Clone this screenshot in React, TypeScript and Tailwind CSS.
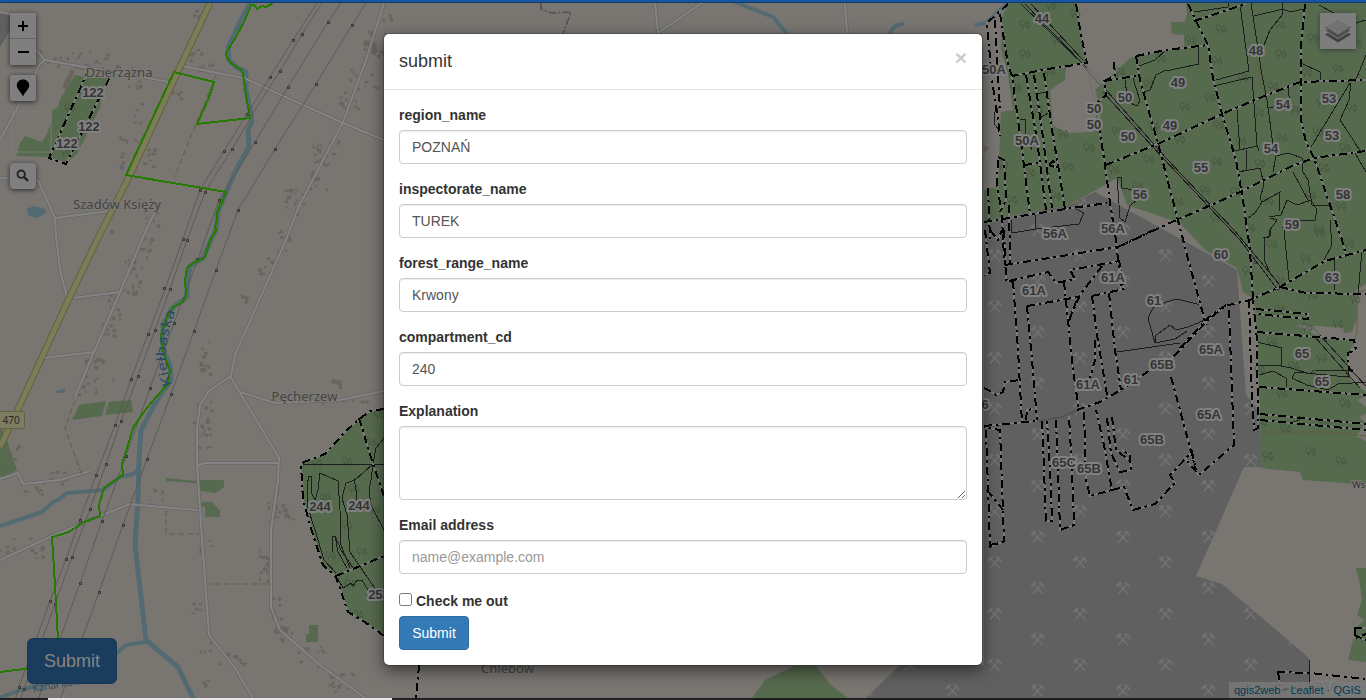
import React from "react";

const LAND = "#797672";
const FOREST = "#566a4e";
const QUARRY = "#606060";

const roads: string[] = [
  "0,178 38,180 55,218 56,235 60,270 67,297",
  "55,218 110,211",
  "0,140 35,75 39,65 45,60 36,50 20,16 0,12",
  "45,60 90,68 170,82",
  "182,66 244,78 343,123 384,140",
  "384,3 365,63 343,122 298,208 286,240 235,355 231,376 209,391 200,405 197,430 197,464 202,540 209,635 235,668 254,700",
  "230,376 279,458 278,480 271,530 271,607 280,630 320,665 365,698",
  "240,392 275,403 340,400 384,391",
  "198,466 204,463 278,463",
  "0,560 52,536 100,516 130,504 138,505 198,510",
  "155,212 146,230 120,292 94,352 75,397",
  "72,298 120,292",
  "44,358 94,352",
  "0,479 18,473 23,484 60,480 90,471",
  "655,3 658,33 702,3",
  "845,3 847,33",
];

const power: string[] = [
  "317,3 293,40 270,77 224,151 200,190 183,239 164,292 148,334 131,379 115,425 96,475 80,520 66,559 50,601 19,687 15,700",
  "322,3 302,34 280,71 258,105 232,149 205,192 187,240 170,289 155,330 138,376 121,421 106,464 90,509 72,557 55,604 24,689 20,700",
  "341,3 328,22 288,87 255,142 219,200 198,259 174,323 150,388 126,456 102,521 80,583 38,700",
  "366,3 352,25 316,84 275,149 238,210 216,270 194,331 171,394 147,459 123,525 99,592 60,700",
];
const pylons: number[][] = [
  [293, 40], [270, 77], [247, 114], [224, 151], [200, 190], [183, 239], [164, 288], [148, 334], [131, 379], [115, 425], [96, 475], [80, 520], [66, 559], [50, 601], [19, 687],
  [302, 34], [280, 71], [232, 149], [205, 192], [187, 240], [170, 289], [155, 330], [138, 376], [121, 421], [106, 464], [90, 509], [72, 557], [55, 604], [24, 689],
  [328, 22], [288, 87], [255, 142], [219, 200], [197, 259], [174, 323], [150, 388], [126, 456], [102, 521], [80, 583],
  [352, 25], [316, 84], [275, 149], [238, 210], [216, 270], [194, 331], [171, 394], [147, 459], [123, 525], [99, 592],
  [1057, 38], [1158, 151], [1206, 206], [1255, 262], [1278, 288], [1351, 370],
];

const green =
  "273,3 266,7 262,6 257,9 256,7 254,5 251,5 245,20 236,37 226,53 227,58 232,64 240,69 243,73 244,82 246,95 250,118 197,124 208,100 214,82 174,72 126,175 226,192 223,199 223,202 220,204 219,209 217,212 217,221 215,226 216,231 211,238 208,247 205,257 200,260 193,263 187,268 185,280 186,294 183,302 175,306 169,313 165,323 161,335 162,347 166,361 170,370 168,384 155,398 143,413 133,428 128,445 122,464 123,475 104,488 99,505 100,516 82,523 69,532 52,537 55,585 58,640";

const dashed: string[] = [
  "89,69 49,158 66,164 112,73 89,69",
  "384,409 370,411 357,421 345,432 325,454 304,462 301,465 303,500 313,535 323,565 336,577 348,612 362,620 384,636",
  "359,418 373,464 384,496", "336,576 360,566 384,556",
  "1008,4 987,23 992,80 998,120 1000,136",
  "995,20 998,75 1000,110",
  "1000,14 1008,65 1012,76 1022,150 1030,214",
  "1076,4 1081,35 1087,63 1048,69 1012,76",
  "1026,75 1037,140 1046,210", "1034,75 1042,130 1052,208",
  "1044,73 1052,130 1058,165 1065,209", "1024,165 1040,163",
  "1049,165 1053,161 1058,168 1049,165",
  "998,157 1004,160 1006,200 1000,212", "988,188 990,240", "998,160 997,185 1002,215 1003,240",
  "984,222 1065,209 1107,203",
  "1114,62 1115,76 1104,81 1106,95 1098,102 1100,133 1105,165 1110,203 1116,240 1121,289",
  "1104,81 1136,76", "1136,56 1140,80 1147,105 1158,143 1170,190 1180,228 1191,270 1206,325",
  "1136,56 1166,50 1208,45", "1106,165 1160,143 1222,114 1262,97 1300,82 1366,80",
  "1188,4 1198,25 1208,45 1213,78 1222,114 1236,160 1243,200 1250,250 1253,300",
  "1194,21 1246,4", "1305,4 1301,45 1301,120 1306,142 1314,158 1330,205 1342,240 1346,255",
  "1118,247 1172,222 1200,210 1240,192 1290,167 1314,158 1366,151",
  "1005,265 1118,247 1156,229",
  "1009,281 1048,272 1056,283 1075,279 1070,270 1120,261",
  "985,230 990,273 984,275", "1004,230 1006,280 1012,282", "1009,205 1010,265", "990,230 998,240 1002,230 1005,265",
  "1013,281 1018,350 1022,423", "1027,306 1032,360 1037,420", "1027,306 1078,297 1074,307 1069,321",
  "1064,282 1068,320 1073,370 1079,410", "1102,266 1080,295 1069,320",
  "1092,296 1124,289 1119,260", "1092,296 1097,335 1107,395", "1109,293 1115,350 1121,390",
  "1095,340 1095,360 1090,378",
  "984,426 1037,421", "1077,410 1100,402 1124,388 1150,370 1172,358 1180,350 1208,320 1225,306 1250,300 1280,287 1325,261 1366,250",
  "1180,348 1208,318 1226,305",
  "1042,421 1044,470 1046,521 1052,521 1050,470 1047,421",
  "1056,420 1058,470 1060,530 1074,525 1072,470 1069,416",
  "1084,412 1086,480 1090,496 1112,490 1104,445 1096,410",
  "1107,418 1111,453 1120,472 1131,470 1130,455 1122,450",
  "1112,417 1116,450 1130,461", "1112,490 1124,487 1133,510 1155,504 1175,483 1170,475 1192,452 1196,470",
  "1171,377 1180,410 1196,470", "1229,310 1234,445 1199,475 1186,460",
  "986,430 990,547 1004,541 1000,430 984,427", "987,490 1003,510", "990,545 1004,542",
  "984,388 992,392 996,395 1003,392 1005,382 1020,380", "1026,420 1027,410 1033,409",
  "1249,300 1252,400 1254,430 1258,428 1257,340 1253,300",
  "1256,309 1308,314 1308,319 1257,314", "1257,332 1354,340 1356,350 1348,353 1349,370 1356,372",
  "1259,387 1366,395", "1260,414 1366,424", "1260,420 1366,430",
  "1280,287 1306,293 1366,294",
  "1277,672 1310,673 1366,679", "1278,672 1281,690 1300,687",
  "419,665 416,700", "1354,628 1366,628", "1354,635 1366,640", "1355,627 1355,638 1366,634",
];

const thin: string[] = [
  "303,464 384,464", "384,438 376,448 373,464 355,480 346,483 342,498 347,515 350,552 376,590",
  "308,508 307,485 309,476 312,477 311,492 315,500 318,490 320,473 338,481 340,510 341,545 350,568",
  "308,508 315,530 324,560 336,573", "373,464 371,480 369,490 371,505 384,530", "354,478 356,490 356,500",
  "333,552 332,536 335,536 338,552 347,568", "335,536 341,550 353,568", "336,576 343,588 351,583 353,586 357,580 362,580 368,590",
  "1021,4 1087,68", "1025,4 1082,63", "1031,4 1083,60", "1103,92 1163,158 1240,240 1278,290",
  "1106,90 1166,158 1234,230 1280,285", "1320,335 1366,386", "1314,336 1360,388",
  "1020,119 1025,119 1026,135 1032,150", "1035,94 1048,92",
  "1040,118 1048,113", "1000,106 994,113 995,125 1000,131", "1125,80 1128,102 1137,106 1140,101 1133,78",
  "1166,70 1156,75 1150,90 1144,92", "1139,66 1155,60 1166,50", "1011,220 1012,233 1036,229 1079,224 1084,213 1074,208",
  "1035,215 1036,230", "1117,177 1121,177 1122,188 1134,190", "1117,177 1120,218 1125,222 1130,206 1142,195",
  "1194,12 1228,7 1228,3", "1240,5 1249,71 1216,80", "1251,3 1262,75 1267,100 1273,145",
  "1254,16 1283,9 1290,12 1304,9", "1282,3 1283,14 1270,30 1262,50", "1214,86 1252,77 1257,145 1259,151",
  "1166,71 1199,64 1198,47", "1237,110 1240,150", "1234,151 1258,146", "1269,108 1290,103 1288,88",
  "1301,63 1320,72 1320,80", "1350,83 1311,147", "1351,83 1349,100 1340,120 1361,152",
  "1366,55 1355,82", "1239,172 1246,170 1247,150", "1239,172 1260,168 1264,185 1260,198 1262,202 1280,192 1279,212",
  "1273,172 1276,156 1288,153 1302,158 1303,172 1308,180 1312,205 1331,206",
  "1262,202 1255,213 1248,218", "1293,172 1309,202",
  "1269,217 1281,215 1287,200 1297,205 1311,200 1317,210 1315,220 1297,220 1282,228",
  "1284,230 1285,240", "1270,218 1277,220 1270,230 1269,237 1263,238", "1270,230 1270,236 1264,238 1264,260 1271,275", "1284,230 1289,280",
  "1330,220 1332,245 1324,260", "1334,258 1334,290", "1362,250 1358,295",
  "1155,343 1148,318 1153,308 1166,302 1177,299 1201,305", "1155,343 1155,336 1170,325 1176,330 1188,327 1205,320",
  "1155,343 1175,339 1187,331", "1117,352 1180,343",
  "1257,342 1282,348 1281,366 1259,365", "1259,375 1273,371 1286,378 1287,387",
  "1281,366 1291,368 1310,374 1314,370 1348,371 1348,377 1295,372 1292,378 1307,385 1328,390 1338,384 1366,382",
  "1309,660 1309,700", "1290,423 1299,420 1299,416", "1319,5 1345,19 1352,24 1366,20", "1366,172 1355,153",
];

const trees: number[][] = [
  [1025, 25], [1025, 54], [1050, 72], [1016, 88], [1038, 110], [1051, 6], [1075, 14], [1063, 134], [1089, 148], [1068, 167], [1030, 173], [1056, 196], [1012, 200], [1003, 165], [1117, 131], [1114, 170], [1149, 84], [1154, 126], [1120, 72], [1149, 160], [1138, 187], [1161, 59], [1057, 40],
  [1221, 29], [1191, 40], [1217, 61], [1243, 78], [1281, 54], [1280, 25], [1273, 87], [1259, 113], [1210, 98], [1185, 107], [1219, 125], [1282, 138], [1241, 141], [1217, 162], [1205, 190], [1178, 202], [1180, 140], [1260, 164], [1268, 201], [1236, 192], [1216, 218], [1250, 228], [1311, 195], [1324, 168], [1341, 206], [1319, 230], [1313, 38], [1338, 69], [1307, 73], [1352, 108], [1322, 102], [1345, 148], [1318, 132], [1295, 110], [1357, 43],
  [1272, 245], [1306, 259], [1349, 244], [1320, 233], [1280, 281], [1280, 310], [1307, 328], [1312, 295], [1355, 300], [1338, 324], [1272, 342], [1322, 358], [1294, 366], [1260, 370], [1282, 394], [1345, 404], [1286, 429], [1262, 423], [1311, 452], [1268, 456], [1341, 461], [1324, 422], [1248, 271],
  [317, 463], [347, 462], [354, 489], [325, 498], [347, 525], [362, 552], [331, 556], [350, 584], [358, 615], [371, 443], [375, 510], [70, 108], [66, 152], [380, 415],
];

type Label = [string, number, number];
const labels: Label[] = [
  ["122", 93, 93], ["122", 89, 127], ["122", 67, 144], ["244", 320, 507], ["244", 359, 506], ["253", 379, 595],
  ["44", 1042, 19], ["50A", 994, 70], ["50", 1125, 98], ["50", 1094, 109], ["50", 1094, 125], ["50", 1128, 137], ["50A", 1027, 141],
  ["48", 1256, 51], ["49", 1178, 83], ["49", 1170, 126], ["54", 1283, 105], ["53", 1329, 99], ["53", 1332, 136], ["54", 1271, 149],
  ["55", 1201, 168], ["56", 1140, 195], ["58", 1343, 195], ["59", 1292, 225], ["56A", 1055, 234], ["56A", 1113, 229], ["60", 1221, 255],
  ["63", 1332, 278], ["61A", 1034, 291], ["61A", 1113, 278], ["61", 1154, 301], ["65A", 1211, 350], ["65B", 1162, 365], ["61", 1131, 380],
  ["61A", 1088, 385], ["65", 1302, 354], ["65", 1322, 382], ["65A", 1209, 415], ["65B", 1152, 440], ["65C", 1064, 463], ["65B", 1089, 469], ["6", 985, 405],
];

/* x, y, spread x, spread y, count */
const clusters: number[][] = [
  [58, 57, 20, 9, 18], [92, 60, 15, 9, 13], [125, 70, 16, 5, 5], [134, 84, 5, 4, 5], [137, 112, 4, 12, 5], [130, 150, 11, 15, 16], [148, 154, 5, 12, 8],
  [176, 94, 6, 6, 5], [152, 218, 8, 9, 8], [146, 247, 6, 12, 10], [132, 275, 10, 20, 18], [113, 304, 8, 16, 12], [104, 325, 10, 12, 10], [98, 357, 14, 6, 7],
  [87, 380, 10, 16, 15], [374, 44, 12, 14, 12], [362, 75, 14, 14, 14], [348, 98, 10, 12, 14], [325, 152, 14, 12, 20], [317, 176, 9, 16, 12], [298, 199, 14, 14, 16],
  [280, 240, 10, 12, 9], [263, 265, 9, 12, 7], [203, 357, 6, 16, 14], [200, 420, 10, 20, 16], [204, 438, 7, 10, 8], [342, 400, 26, 3, 7],
  [275, 498, 10, 13, 12], [281, 515, 14, 7, 10], [265, 565, 6, 16, 16], [273, 607, 8, 18, 11], [287, 635, 13, 8, 12], [311, 656, 14, 10, 12], [340, 680, 12, 12, 14], [205, 548, 6, 8, 5],
  [5, 545, 10, 8, 7], [28, 545, 15, 14, 9], [30, 490, 12, 5, 8], [57, 476, 16, 6, 10], [158, 497, 10, 8, 6], [194, 609, 6, 7, 5], [206, 646, 8, 5, 5], [204, 679, 5, 5, 5],
  [230, 660, 14, 10, 9], [8, 455, 9, 10, 8], [203, 66, 8, 4, 7], [194, 15, 5, 5, 4], [196, 40, 8, 20, 5], [386, 22, 4, 20, 7], [120, 378, 10, 4, 2], [984, 150, 3, 8, 4],
];

function scatter(): number[][] {
  let s = 17;
  const rnd = () => {
    s = (s * 16807) % 2147483647;
    return s / 2147483647;
  };
  const out: number[][] = [];
  clusters.forEach(([x, y, dx, dy, n]) => {
    for (let i = 0; i < n; i++) {
      out.push([x + (rnd() * 2 - 1) * dx, y + (rnd() * 2 - 1) * dy, 1.5 + rnd() * 2.6, 1.5 + rnd() * 2.2, rnd() * 50 - 25]);
    }
  });
  return out;
}

const buildings = scatter();

function MapCanvas() {
  return (
    <svg className="absolute inset-0 h-full w-full" viewBox="0 0 1366 700" aria-hidden="true">
      <defs>
        <pattern id="mine" x="973" y="231" width="85.33" height="51.2" patternUnits="userSpaceOnUse">
          <g fill="none" stroke="#747474" strokeWidth="1.2">
            <path d="M17 30 L26 20 M17 20 L27 30" />
            <path d="M15.5 22.5 L19.5 18.5" strokeWidth="2.2" />
            <path d="M23 19 Q27 19.5 28 24" strokeWidth="1.5" />
          </g>
          <g fill="none" stroke="#747474" strokeWidth="1.2">
            <path d="M60 55.6 L69 45.6 M60 45.6 L70 55.6 M60 4.4 L69 -5.6 M60 -5.6 L70 4.4" />
            <path d="M58.5 48.1 L62.5 44.1" strokeWidth="2.2" />
            <path d="M66 44.6 Q70 45.1 71 49.6" strokeWidth="1.5" />
          </g>
        </pattern>
        <g id="trees" fill="none" stroke="#45583f" strokeWidth="0.9">
          <path d="M-2.5 4.5V0 M-2.5 1.5 Q-5.5 1 -5 -2 Q-4.5 -4.5 -2.5 -4.5 Q-.5 -4 0 -2 Q0 1 -2.5 1.5" />
          <path d="M3 4.5V2 M3 -4 L.8 1.8 H5.2 Z" />
        </g>
        <path id="river-name" d="M172 385 Q163 362 167 343 Q169 325 178 306" />
      </defs>
      <rect width="1366" height="700" fill={LAND} />
      <path d="M0 12 L18 15 L10 30 L0 47Z" fill={QUARRY} />

      <g fill={FOREST}>
        <path d="M75 75 85 77 108 78 103 90 100 108 93 122 77 154 66 164 48 157 16 156 20 143 25 136 42 142 47 134 51 122 52 110 58 107 60 99Z" />
        <path d="M384 409 370 411 357 421 325 454 304 462 301 465 303 500 313 535 323 565 336 577 348 612 362 620 384 636Z" />
        <path d="M79 405 106 401 102 416 72 420Z M109 402 131 400 133 412 105 415Z M0 426 6 437 17 470 3 477 0 476Z" />
        <path d="M166 478 197 481 197 483 166 481Z M197 480 224 480 224 487 216 493 200 491Z M201 502 212 502 220 511 220 517 205 517 205 507 200 506Z M309 625 318 625 318 642 306 642 306 634 309 634Z" />
        <path d="M1008 3H1077L1087 63 1066 68 1065 80 1050 90 1053 125 1066 133 1094 132 1098 100 1095 90 1115 72 1130 58 1137 56 1184 46 1184 35 1172 34 1171 22 1185 22 1187 13 1186 3H1366V284L1356 290 1357 318 1352 332 1344 333 1343 328 1310 326 1319 337 1354 341 1349 353 1348 378 1366 392V396L1357 400 1366 407V414L1359 417 1366 423 1356 436 1366 441V485L1343 483 1303 480 1300 472 1261 468 1260 410 1257 350 1253 298 1243 292 1237 268 1205 250 1180 223 1127 205 1117 178 1069 205 1000 218 984 228V190L998 187 1001 112 1013 110 1008 75 1001 49 1002 18Z" />
        <path d="M1356 568H1366V622L1357 615 1362 600 1360 585Z M1356 628 1366 618V662L1348 660Z" />
        <path d="M752 698 765 680 794 666 815 665 830 684 850 700Z" />
      </g>
      <path d="M1296 325 1318 326 1341 328 1343 334 1316 335Z" fill={LAND} />
      <path d="M984 228 1001 218 1069 205 1095 192 1237 270 1246 395 1259 410 1262 467 1244 467 1196 576 1222 584 1309 658V700H864L900 665 984 665Z" fill={QUARRY} />
      <path d="M984 228 1001 218 1069 205 1095 192 1237 270 1246 395 1259 410 1262 467 1244 467 1196 576 1222 584 1309 658V700H864L900 665H984Z" fill="url(#mine)" />

      <g fill="none" stroke="#546a72" strokeLinejoin="round">
        <path strokeWidth="5" d="M250 3 240 22 228 48 229 60 236 67 246 72 246 90 251 115 252 122 248 130 249 147 236 170 225 195 218 212 216 230 211 240 203 258 190 266 187 285 187 297 172 308 163 325 163 350 170 365 171 380 157 400 141 430 139 460 138 500 135 545 146 640 178 667 194 700" />
        <path strokeWidth="4" d="M0 526 42 512 53 502 58 500 67 493 80 492 103 490 120 477 133 474 139 469 M146 642 126 645 117 653 60 680 20 690 0 698" />
        <path strokeWidth="4" d="M735 2 773 17 787 34 M890 34 Q893 24 904 24 M975 25 986 23 996 14 1008 3" />
      </g>
      <path d="M26 209 34 206 45 209 46 213 37 218 29 216Z M56 391 66 388 64 393 57 393Z M120 165 124 166 123 170 119 169Z" fill="#546a72" />

      <g fill="#6c635f">
        {buildings.map(([x, y, w, h, a], i) => (
          <rect key={i} x={x} y={y} width={w} height={h} transform={`rotate(${a} ${x} ${y})`} />
        ))}
        <path d="M62 87 71 69 75 71 67 90Z M364 40 377 43 376 55 371 54 372 47 363 46Z M332 379 342 381 342 389 339 389 339 385 331 383Z M97 357 105 360 104 363 96 360Z M240 294 249 297 247 304 244 303 246 299 241 298Z M281 626 289 627 288 633 281 632Z M110 230h4v4h-4z" />
      </g>

      <g fill="none" strokeLinejoin="round">
        {roads.map((p, i) => <polyline key={i} points={p} stroke="#696767" strokeWidth="3.6" />)}
        {roads.map((p, i) => <polyline key={i} points={p} stroke="#858485" strokeWidth="2" />)}
        <path d="M210 3 180 67 130 175 97 240 66 305 14 418 0 447" stroke="#62613f" strokeWidth="7" />
        <path d="M210 3 180 67 130 175 97 240 66 305 14 418 0 447" stroke="#7d7c59" strokeWidth="5" />
        <path d="M216 75 174 178 M75 400 65 428 80 470 M77 461 82 474 M206 584H271 M166 510V534H200" stroke="#685b42" strokeDasharray="6 3" />
        <path d="M1116 290 1118 308 1127 321 M1261 432 1330 432 1366 436 M1255 50 1265 95 M1158 153 1235 240 M1366 290 1357 293 1357 330 1353 348" stroke="#655b3d" strokeWidth="0.9" />
        <path d="M541 3 541 9 552 13 571 12 563 34" stroke="#5c505c" strokeWidth="1.8" strokeDasharray="8 2 2 2" />
        <path d="M1038 421 1062 417 1078 410 M1107 398 1122 391" stroke="#584c58" strokeWidth="1.5" />
        <path d="M1086 64 1095 103 M1087 66 1103 84" stroke="#6d6d6d" />
      </g>

      <g fill="none" stroke="#595755" strokeWidth="0.9">
        {power.map((p, i) => <polyline key={i} points={p} />)}
        <path d="M1028 3 1278 288 1365 386" stroke="#646762" strokeWidth="1.5" />
      </g>
      <g fill="#696764" stroke="#3b3939">
        {pylons.map(([x, y], i) => <rect key={i} x={x - 0.5} y={y - 0.5} width="2" height="2" />)}
      </g>
      {trees.map(([x, y], i) => <use key={i} href="#trees" x={x} y={y} />)}
      <g fill="none" stroke="#1b1e1b" strokeWidth="1" shapeRendering="crispEdges">
        {thin.map((p, i) => <polyline key={i} points={p} />)}
      </g>
      <g fill="none" stroke="#7b7b7b" strokeWidth="1.8" shapeRendering="crispEdges">
        {dashed.map((p, i) => <polyline key={i} points={p} />)}
      </g>
      <g fill="none" stroke="#000" strokeWidth="2" strokeDasharray="8 4 2.5 4" shapeRendering="crispEdges">
        {dashed.map((p, i) => <polyline key={i} points={p} />)}
      </g>
      <g fill="none" stroke="#257b00" strokeWidth="2" shapeRendering="crispEdges">
        <polyline points={green} />
        <path d="M0 672 40 667" />
      </g>

      <g fill="none" stroke="#817f7b" strokeWidth="1.5" opacity=".5">
        <rect x="12" y="112" width="39" height="40" rx="2" />
      </g>

      <g fill="#434342" stroke="#7c7a76" strokeWidth="2" paintOrder="stroke" fontFamily="Noto Sans" fontSize="12.8">
        <text x="85.5" y="77" textLength="67" lengthAdjust="spacingAndGlyphs">Dzierżązna</text>
        <text x="73" y="209" textLength="88" lengthAdjust="spacingAndGlyphs">Szadów Księży</text>
        <text x="271.5" y="401" textLength="66" lengthAdjust="spacingAndGlyphs">Pęcherzew</text>
        <text x="481" y="673" textLength="53" lengthAdjust="spacingAndGlyphs">Chlebów</text>
        <text x="1352" y="488" fontSize="9.5" fill="#333">Ws</text>
      </g>
      <g fill="#294967" fontFamily="Noto Sans" fontSize="13">
        <text><textPath href="#river-name" textLength="76" lengthAdjust="spacingAndGlyphs">Kiełbaska</textPath></text>
        <text fontSize="10" transform="translate(33 692) rotate(-9)">Kanał Rów</text>
      </g>
      <rect x="-4" y="411.5" width="28.5" height="17" rx="2" fill="#7d7c61" stroke="#62613f" />
      <text x="2.5" y="424" fontFamily="Noto Sans" fontSize="10" fill="#2c2c25">470</text>

      <g fill="#353535" stroke="#818181" strokeWidth="4" strokeLinejoin="round" paintOrder="stroke" fontFamily="Liberation Sans" fontSize="13" fontWeight="bold" textAnchor="middle">
        {labels.map(([t, x, y], i) => <text key={i} x={x} y={y + 4}>{t}</text>)}
        <text x="1327" y="691" opacity=".55">83A</text>
      </g>
    </svg>
  );
}

const controlClass = "flex h-[26px] w-[26px] items-center justify-center bg-[#7f7f7f] text-black shadow-[0_1px_5px_rgba(0,0,0,0.65)]";

function MapControls() {
  return (
    <>
      <div className="absolute left-[10px] top-[13px] flex flex-col">
        <div className="flex flex-col shadow-[0_1px_5px_rgba(0,0,0,0.65)]">
          <button className="flex h-[26px] w-[26px] items-center justify-center rounded-t-[2px] border-b border-[#666] bg-[#7f7f7f]">
            <svg width="10" height="10" viewBox="0 0 10 10"><path d="M0 5H10M5 0V10" stroke="#000" strokeWidth="2" /></svg>
          </button>
          <button className="flex h-[26px] w-[26px] items-center justify-center rounded-b-[2px] bg-[#7f7f7f]">
            <svg width="11" height="10" viewBox="0 0 11 10"><path d="M0 5H11" stroke="#000" strokeWidth="2" /></svg>
          </button>
        </div>
        <button className={controlClass + " mt-[10px] rounded-[2px]"}>
          <svg width="14" height="18" viewBox="0 0 14 18"><path d="M7 .5C3.3.5.8 3 .8 6.5.8 10 4.8 12.5 7 17.5 9.200 12.5 13.200 10 13.200 6.500 13.200 3 10.700.5 7 .5Z" /></svg>
        </button>
        <button className={controlClass + " mt-[62px] rounded-[4px]"}>
          <svg width="14" height="14" viewBox="0 0 14 14" fill="none" stroke="#222"><circle cx="5.200" cy="5.200" r="3.700" strokeWidth="1.900" /><path d="M8 8 12 12" strokeWidth="2.400" /></svg>
        </button>
      </div>
      <button className="absolute right-[10px] top-[13px] flex h-9 w-9 items-center justify-center rounded-[1px] bg-[#7d7d7d] shadow-[0_1px_5px_rgba(0,0,0,0.4)]">
        <svg width="26" height="26" viewBox="0 0 26 26">
          <path d="M0 16.500 13 24.500 26 16.500 23 15 13 21 3 15Z" fill="#404040" />
          <path d="M0 12.500 13 20.500 26 12.500 23 11 13 17 3 11Z" fill="#4c4c4c" stroke="#7d7d7d" strokeWidth=".8" />
          <path d="M0 8.500 13 1 26 8.500 13 16.500Z" fill="#727272" stroke="#868686" strokeWidth=".6" />
          <path d="M0 8.500 13 16.500 26 8.500V9.500L13 17.600 0 9.500Z" fill="#454545" />
        </svg>
      </button>
      <button className="absolute left-[27px] top-[638px] h-[46px] w-[90px] rounded-[6px] border border-[#173753] bg-[#1a3d5d] text-[18px] leading-none text-[#858585]">Submit</button>
      <div className="absolute bottom-[2px] right-0 flex h-4 w-[137px] items-center justify-between bg-[#7b7b7b]/80 pl-[5px] pr-[5px] text-[11px] leading-4 text-[#003c52]">
        <span>qgis2web</span>
        <span className="h-px w-px bg-[#333]" />
        <span>Leaflet</span>
        <span className="h-px w-px bg-[#333]" />
        <span>QGIS</span>
      </div>
    </>
  );
}

const fields = [
  { label: "region_name", value: "POZNAŃ" },
  { label: "inspectorate_name", value: "TUREK" },
  { label: "forest_range_name", value: "Krwony" },
  { label: "compartment_cd", value: "240" },
];

const inputClass = "mt-[5px] block h-[34px] w-full rounded-[4px] border border-[#ccc] bg-white px-3 py-[6px] text-[14px] leading-5 text-[#555] shadow-[inset_0_1px_1px_rgba(0,0,0,0.075)] outline-none placeholder:text-[#999]";

function SubmitDialog() {
  return (
    <div role="dialog" className="relative w-[600px] rounded-[6px] border border-black/20 bg-white bg-clip-padding shadow-[0_5px_15px_rgba(0,0,0,0.5)]">
      <header className="flex h-14 items-start justify-between border-b border-[#e5e5e5] px-[15px] pt-[14px]">
        <h4 className="text-[18px] leading-[26px] text-[#333]">submit</h4>
        <button className="-mt-[1px] text-[21px] font-bold leading-[21px] text-[#ccc]">×</button>
      </header>
      <form className="flex flex-col gap-[15px] p-[15px] text-[14px] leading-5 text-[#333]">
        {fields.map((f) => (
          <label key={f.label} className="block font-bold">
            {f.label}
            <input className={inputClass + " font-normal"} defaultValue={f.value} />
          </label>
        ))}
        <label className="block font-bold">
          Explanation
          <textarea className="mt-[5px] block h-[74px] w-full resize-y rounded-[4px] border border-[#ccc] px-3 py-[6px] font-normal shadow-[inset_0_1px_1px_rgba(0,0,0,0.075)] outline-none" />
        </label>
        <label className="block font-bold">
          Email address
          <input className={inputClass + " font-normal"} placeholder="name@example.com" />
        </label>
        <div className="flex flex-col items-start gap-[5px]">
          <label className="mt-[2px] flex h-5 items-center gap-1 font-bold">
            <input type="checkbox" className="-mt-[3px] h-[13px] w-[13px]" />
            Check me out
          </label>
          <button type="button" className="h-[34px] w-[70px] rounded-[4px] border border-[#2e6da4] bg-[#337ab7] text-[14px] leading-5 text-white">Submit</button>
        </div>
      </form>
    </div>
  );
}

export default function App() {
  return (
    <main className="relative flex h-[700px] w-[1366px] items-start justify-center overflow-hidden pt-[33px] font-['Liberation_Sans',Arial,sans-serif]">
      <MapCanvas />
      <MapControls />
      <div className="absolute inset-x-0 top-0 h-[3px] border-b border-[#173a65] bg-[#1455a4]" />
      <div className="absolute inset-x-0 bottom-0 flex h-[2px] bg-[#211e1f]">
        <div className="ml-12 w-[344px] bg-[#e9e7e8]" />
      </div>
      <SubmitDialog />
    </main>
  );
}
